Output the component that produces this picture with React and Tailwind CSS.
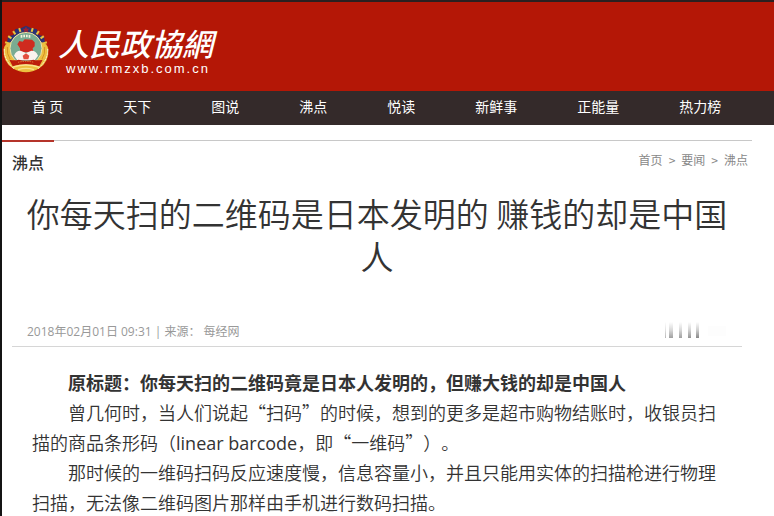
import React from 'react';

const navItems = ['首 页', '天下', '图说', '沸点', '悦读', '新鲜事', '正能量', '热力榜'];
const crumbs = ['首页', '要闻', '沸点'];
const teeth = [-72, -54, -36, -18, 18, 36, 54, 72];

function Emblem() {
    return (
        <svg className="w-12 h-12 shrink-0" viewBox="0 0 144 144" aria-hidden="true">
            {/* gear */}
            <path d="M14 62 L18 34 L34 30 L40 12 L56 10 L72 2 L88 10 L104 12 L110 30 L126 34 L130 62 Z" fill="#2a3274" />
            {teeth.map(a => (
                <rect key={a} x="69" y="6" width="6" height="12" fill="#e9c23e" transform={`rotate(${a} 72 72)`} />
            ))}
            {/* wheat wreath */}
            <path d="M5 72 Q8 56 24 52 L120 52 Q136 56 139 72 Q142 110 112 130 Q92 142 72 142 Q52 142 32 130 Q2 110 5 72 Z" fill="#ecc040" />
            <path d="M7 72 Q6 108 38 132 M137 72 Q138 108 106 132" fill="none" stroke="#fbf0cc" strokeWidth="3" strokeDasharray="8 2" />
            <path d="M16 66 Q14 88 24 102 M128 66 Q130 88 120 102" fill="none" stroke="#d58f24" strokeWidth="3" />
            <circle cx="72" cy="70" r="48" fill="#79ac92" stroke="#efe3a8" strokeWidth="3" />
            <path d="M72 4 L75 11 L83 11 L77 16 L79 23 L72 19 L65 23 L67 16 L61 11 L69 11 Z" fill="#a02030" />
            <path d="M56 30 h5 v8 h-5 z M64 29 h5 v8 h-5 z M72 29 h5 v8 h-5 z M80 30 h5 v8 h-5 z" fill="#f5f2dc" />
            {/* map and flags */}
            <path d="M46 58 L52 48 L62 50 L68 43 L90 44 L98 52 L98 64 L92 70 L94 82 L54 82 L54 70 Z" fill="#cf2b1f" />
            <path d="M36 92 Q42 76 56 77 L72 84 L88 77 Q102 76 108 92 L98 106 L46 106 Z" fill="#fbf3ee" />
            <path d="M62 92 L72 85 L82 92 L79 103 L65 103 Z" fill="#e2503e" />
            {/* ribbon */}
            <path d="M22 104 Q40 108 50 104 Q72 110 94 104 Q104 108 122 104 L112 124 Q72 112 32 124 Z" fill="#bd1d0c" />
            <path d="M48 112 Q72 106 96 112" fill="none" stroke="#e2863a" strokeWidth="3" strokeDasharray="4 3" />
            <path d="M34 126 Q72 114 110 126 M48 134 Q72 126 96 134" fill="none" stroke="#f9e38c" strokeWidth="4" />
        </svg>
    );
}

function ShareIcons() {
    return (
        <svg className="w-20 h-5" viewBox="0 0 80 20" aria-hidden="true">
            <defs>
                <linearGradient id="fade" x1="0" y1="0" x2="0" y2="1">
                    <stop offset="0" stopColor="#ffffff" />
                    <stop offset="0.5" stopColor="#cfcfcf" />
                    <stop offset="1" stopColor="#888888" />
                </linearGradient>
            </defs>
            <rect x="3" y="0" width="1" height="16" fill="url(#fade)" opacity="0.6" />
            <rect x="7" y="0" width="4" height="16" fill="url(#fade)" opacity="0.8" />
            <rect x="17" y="0" width="3" height="16" fill="url(#fade)" opacity="0.8" />
            <rect x="26" y="0" width="3" height="16" fill="url(#fade)" opacity="0.9" />
            <rect x="34" y="0" width="3" height="16" fill="url(#fade)" />
            <rect x="46" y="4" width="18" height="10" fill="#fdfdfd" />
        </svg>
    );
}

export default function App() {
    return (
        <div lang="zh-CN" className="min-h-screen bg-white border-l-2 border-[#141414] text-[#333333] font-['Noto_Sans_CJK_SC',sans-serif]">
            <header className="border-t-2 border-[#2a2020] bg-[#b41706] text-white">
                <a href="#" className="flex items-center gap-2 h-[89px] pt-1">
                    <Emblem />
                    <span className="flex flex-col pt-1">
                        <span className="text-[31px] leading-9 italic font-medium">人民政協網</span>
                        <span className="pl-2 text-[13px] leading-4 tracking-[2px] font-['Liberation_Sans',sans-serif]">www.rmzxb.com.cn</span>
                    </span>
                </a>
                <nav className="flex h-[34px] items-center bg-[#342a2a] pb-1 text-sm">
                    {navItems.map(item => (
                        <a key={item} href="#" className="px-[30px] whitespace-nowrap">{item}</a>
                    ))}
                </nav>
            </header>

            <main className="pt-[15px] pr-[22px]">
                <div className="flex items-start justify-between border-t border-[#c8c8c8] pr-1">
                    <div className="flex flex-col">
                        <span className="-mt-px h-0.5 w-[52px] bg-[#b5342a]" />
                        <h2 className="pt-2 pl-[10px] text-base leading-6 font-medium">沸点</h2>
                    </div>
                    <div className="flex gap-1.5 pt-[9px] text-xs leading-5 text-[#888888]">
                        {crumbs.map((name, i) => (
                            <React.Fragment key={name}>
                                {i > 0 && <span>&gt;</span>}
                                <a href="#">{name}</a>
                            </React.Fragment>
                        ))}
                    </div>
                </div>

                <article className="px-[10px]">
                    <h1 className="pt-[18px] text-center text-[33px] leading-[43px] font-[350]">
                        你每天扫的二维码是日本发明的 赚钱的却是中国人
                    </h1>

                    <div className="mt-11 flex items-center justify-between border-b border-[#d6d6d6] pl-[15px] pb-1 text-xs text-[#999999] font-['Open_Sans','Noto_Sans_CJK_SC',sans-serif]">
                        <p>2018年02月01日 09:31 | 来源： 每经网</p>
                        <ShareIcons />
                    </div>

                    <div className="pt-5 px-5 text-lg leading-[30px] font-[350] [text-spacing-trim:space-all]">
                        <p className="indent-9 font-bold">原标题：你每天扫的二维码竟是日本人发明的，但赚大钱的却是中国人</p>
                        <p className="indent-9">
                            曾几何时，当人们说起“扫码”的时候，想到的更多是超市购物结账时，收银员扫描的商品条形码（<span className="font-['Open_Sans',sans-serif] font-normal leading-none">linear barcode</span>，即“一维码”）。
                        </p>
                        <p className="indent-9">
                            那时候的一维码扫码反应速度慢，信息容量小，并且只能用实体的扫描枪进行物理扫描，无法像二维码图片那样由手机进行数码扫描。
                        </p>
                    </div>
                </article>
            </main>
        </div>
    );
}
